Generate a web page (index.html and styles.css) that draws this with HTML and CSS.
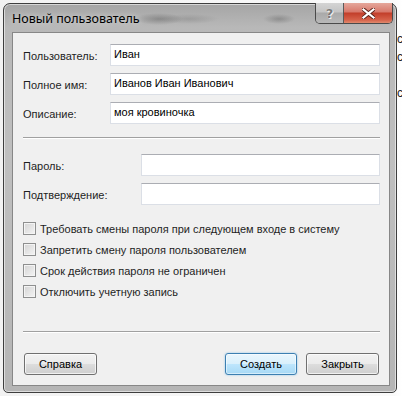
FILE: index.html
```html
<!DOCTYPE html>
<html lang="ru">

<head>
    <meta charset="UTF-8" />
    <meta name="viewport" content="width=device-width, initial-scale=1.0" />
    <title>Новый пользователь</title>
    <link rel="stylesheet" href="styles.css">
</head>

<body>

    <div class="backdrop">
        <span class="peek peek-1">с</span>
        <span class="peek peek-2">с</span>
        <span class="peek peek-3">с</span>
    </div>

    <div class="window">
        <div class="titlebar">
            <span class="title">Новый пользователь</span>
            <div class="caption-btns">
                <span class="cap-btn cap-help">?</span>
                <span class="cap-btn cap-close">
                    <svg width="13" height="11" viewBox="0 0 13 11">
                        <path d="M1.5 1.5 L11.5 9.5 M11.5 1.5 L1.5 9.5" stroke="#5a2218" stroke-width="4" stroke-linecap="square" fill="none"/>
                        <path d="M1.5 1.5 L11.5 9.5 M11.5 1.5 L1.5 9.5" stroke="#ffffff" stroke-width="2.2" stroke-linecap="square" fill="none"/>
                    </svg>
                </span>
            </div>
        </div>

        <div class="panel">
            <div class="fields fields-user">
                <label for="user">Пользователь:</label>
                <input type="text" id="user" value="Иван">
                <label for="fullname">Полное имя:</label>
                <input type="text" id="fullname" value="Иванов Иван Иванович">
                <label for="descr">Описание:</label>
                <input type="text" id="descr" value="моя кровиночка">
            </div>

            <div class="sep sep-top"></div>

            <div class="fields fields-pass">
                <label for="pass">Пароль:</label>
                <input type="password" id="pass">
                <label for="confirm">Подтверждение:</label>
                <input type="password" id="confirm">
            </div>

            <div class="checks">
                <div class="check"><span class="box"></span>Требовать смены пароля при следующем входе в систему</div>
                <div class="check"><span class="box"></span>Запретить смену пароля пользователем</div>
                <div class="check"><span class="box"></span>Срок действия пароля не ограничен</div>
                <div class="check"><span class="box"></span>Отключить учетную запись</div>
            </div>

            <div class="sep sep-bottom"></div>

            <div class="actions">
                <button class="btn">Справка</button>
                <div class="actions-right">
                    <button class="btn btn-default">Создать</button>
                    <button class="btn">Закрыть</button>
                </div>
            </div>
        </div>
    </div>

</body>

</html>
```

FILE: styles.css
```css
body {
    margin: 0;
    background: #f6f6f6;
    font-family: "Liberation Sans", Arial, sans-serif;
    font-size: 11px;
    color: #000;
}

.backdrop {
    position: absolute;
    top: 0;
    left: 0;
    width: 402px;
    height: 396px;
    background: linear-gradient(to right, #f2f2f2, #fafafa 98%, #ffffff);
}

.peek {
    position: absolute;
    left: 397px;
    font-size: 12px;
    color: #222;
}

.peek-1 { top: 32px; }
.peek-2 { top: 50px; }
.peek-3 { top: 86px; }

.window {
    position: relative;
    margin: 3px 0 0 3px;
    width: 394px;
    height: 390px;
    box-sizing: border-box;
    padding: 0 6px 6px 8px;
    border: 1px solid #3e3e3e;
    border-radius: 7px 7px 5px 5px;
    background:
        radial-gradient(ellipse 24px 6px at 155px 15px, rgba(90, 90, 90, 0.45), transparent),
        radial-gradient(ellipse 16px 5px at 275px 15px, rgba(90, 90, 90, 0.4), transparent),
        radial-gradient(ellipse 30px 5px at 185px 15px, rgba(110, 110, 110, 0.3), transparent),
        linear-gradient(to bottom, #a5a5a5, #b8b8b8 6%, #bfbfbf 40%, #b5b5b5);
    box-shadow: inset 0 0 0 1px rgba(255, 255, 255, 0.55);
}

.titlebar {
    height: 28px;
    display: flex;
    align-items: center;
}

.title {
    font-family: "Noto Sans", sans-serif;
    font-size: 12.5px;
    color: #000;
    padding-top: 1px;
    text-shadow: 0 0 6px rgba(255, 255, 255, 0.7);
}

.caption-btns {
    position: absolute;
    top: -1px;
    right: 3px;
    display: flex;
    height: 20px;
    border: 1px solid #4a4a4a;
    border-top: none;
    border-radius: 0 0 5px 5px;
    overflow: hidden;
}

.cap-btn {
    display: flex;
    align-items: center;
    justify-content: center;
    height: 20px;
}

.cap-help {
    width: 27px;
    font-family: "DejaVu Sans", sans-serif;
    font-weight: bold;
    font-size: 13px;
    color: #7a7a7a;
    background: linear-gradient(to bottom, #d4d4d4, #c4c4c4 45%, #a9a9a9 50%, #b8b8b8);
    border-right: 1px solid #5a5a5a;
    text-shadow: 0 0 1px #fff, 1px 1px 0 #eee;
}

.cap-close {
    width: 48px;
    background: linear-gradient(to bottom, #e5a79b, #d7786a 45%, #c23e2a 50%, #d6624a 85%, #e08a6e);
}

.panel {
    height: 354px;
    box-sizing: border-box;
    padding: 11px 9px 0 10px;
    border: 1px solid #878787;
    background: #f0f0f0;
}

.fields {
    display: grid;
    grid-auto-rows: 22px;
    row-gap: 7px;
    align-items: center;
}

.fields-user {
    grid-template-columns: 87px 1fr;
}

.fields-pass {
    grid-template-columns: 118px 1fr;
}

label {
    padding-top: 2px;
    color: #1e1e1e;
}

input {
    height: 22px;
    box-sizing: border-box;
    margin: 0;
    padding: 0 3px 2px;
    border: 1px solid #dbdfe6;
    border-top-color: #abadb3;
    background: #fff;
    font-family: "Liberation Sans", Arial, sans-serif;
    font-size: 11px;
    color: #000;
    outline: none;
}

.sep {
    height: 0;
    border-top: 1px solid #a0a0a0;
    border-bottom: 1px solid #ffffff;
}

.sep-top {
    margin: 13px 0 15px;
}

.checks {
    margin-top: 13px;
}

.check {
    display: flex;
    align-items: center;
    height: 21px;
    color: #1e1e1e;
}

.box {
    width: 13px;
    height: 13px;
    box-sizing: border-box;
    margin-right: 4px;
    border: 1px solid #8e8f8f;
    background: linear-gradient(135deg, #d4d4d4, #f4f4f4);
    box-shadow: inset 0 0 0 1px #f4f4f4;
}

.sep-bottom {
    margin: 29px 0 20px;
}

.actions {
    display: flex;
    justify-content: space-between;
    padding: 0 1px;
}

.actions-right {
    display: flex;
    gap: 9px;
}

.btn {
    width: 73px;
    height: 22px;
    padding: 0 0 1px;
    border: 1px solid #707070;
    border-radius: 3px;
    background: linear-gradient(to bottom, #f2f2f2, #ebebeb 50%, #dddddd 50%, #cfcfcf);
    box-shadow: inset 0 0 0 1px rgba(255, 255, 255, 0.7);
    font-family: "Liberation Sans", Arial, sans-serif;
    font-size: 11px;
    color: #000;
}

.btn-default {
    width: 72px;
    border-color: #3c7fb1;
    background: linear-gradient(to bottom, #eaf6fd, #d9f0fc 50%, #bee6fd 50%, #a7d9f5);
    box-shadow: inset 0 0 0 1px rgba(255, 255, 255, 0.5), 0 0 2px rgba(60, 160, 230, 0.6);
}
```
